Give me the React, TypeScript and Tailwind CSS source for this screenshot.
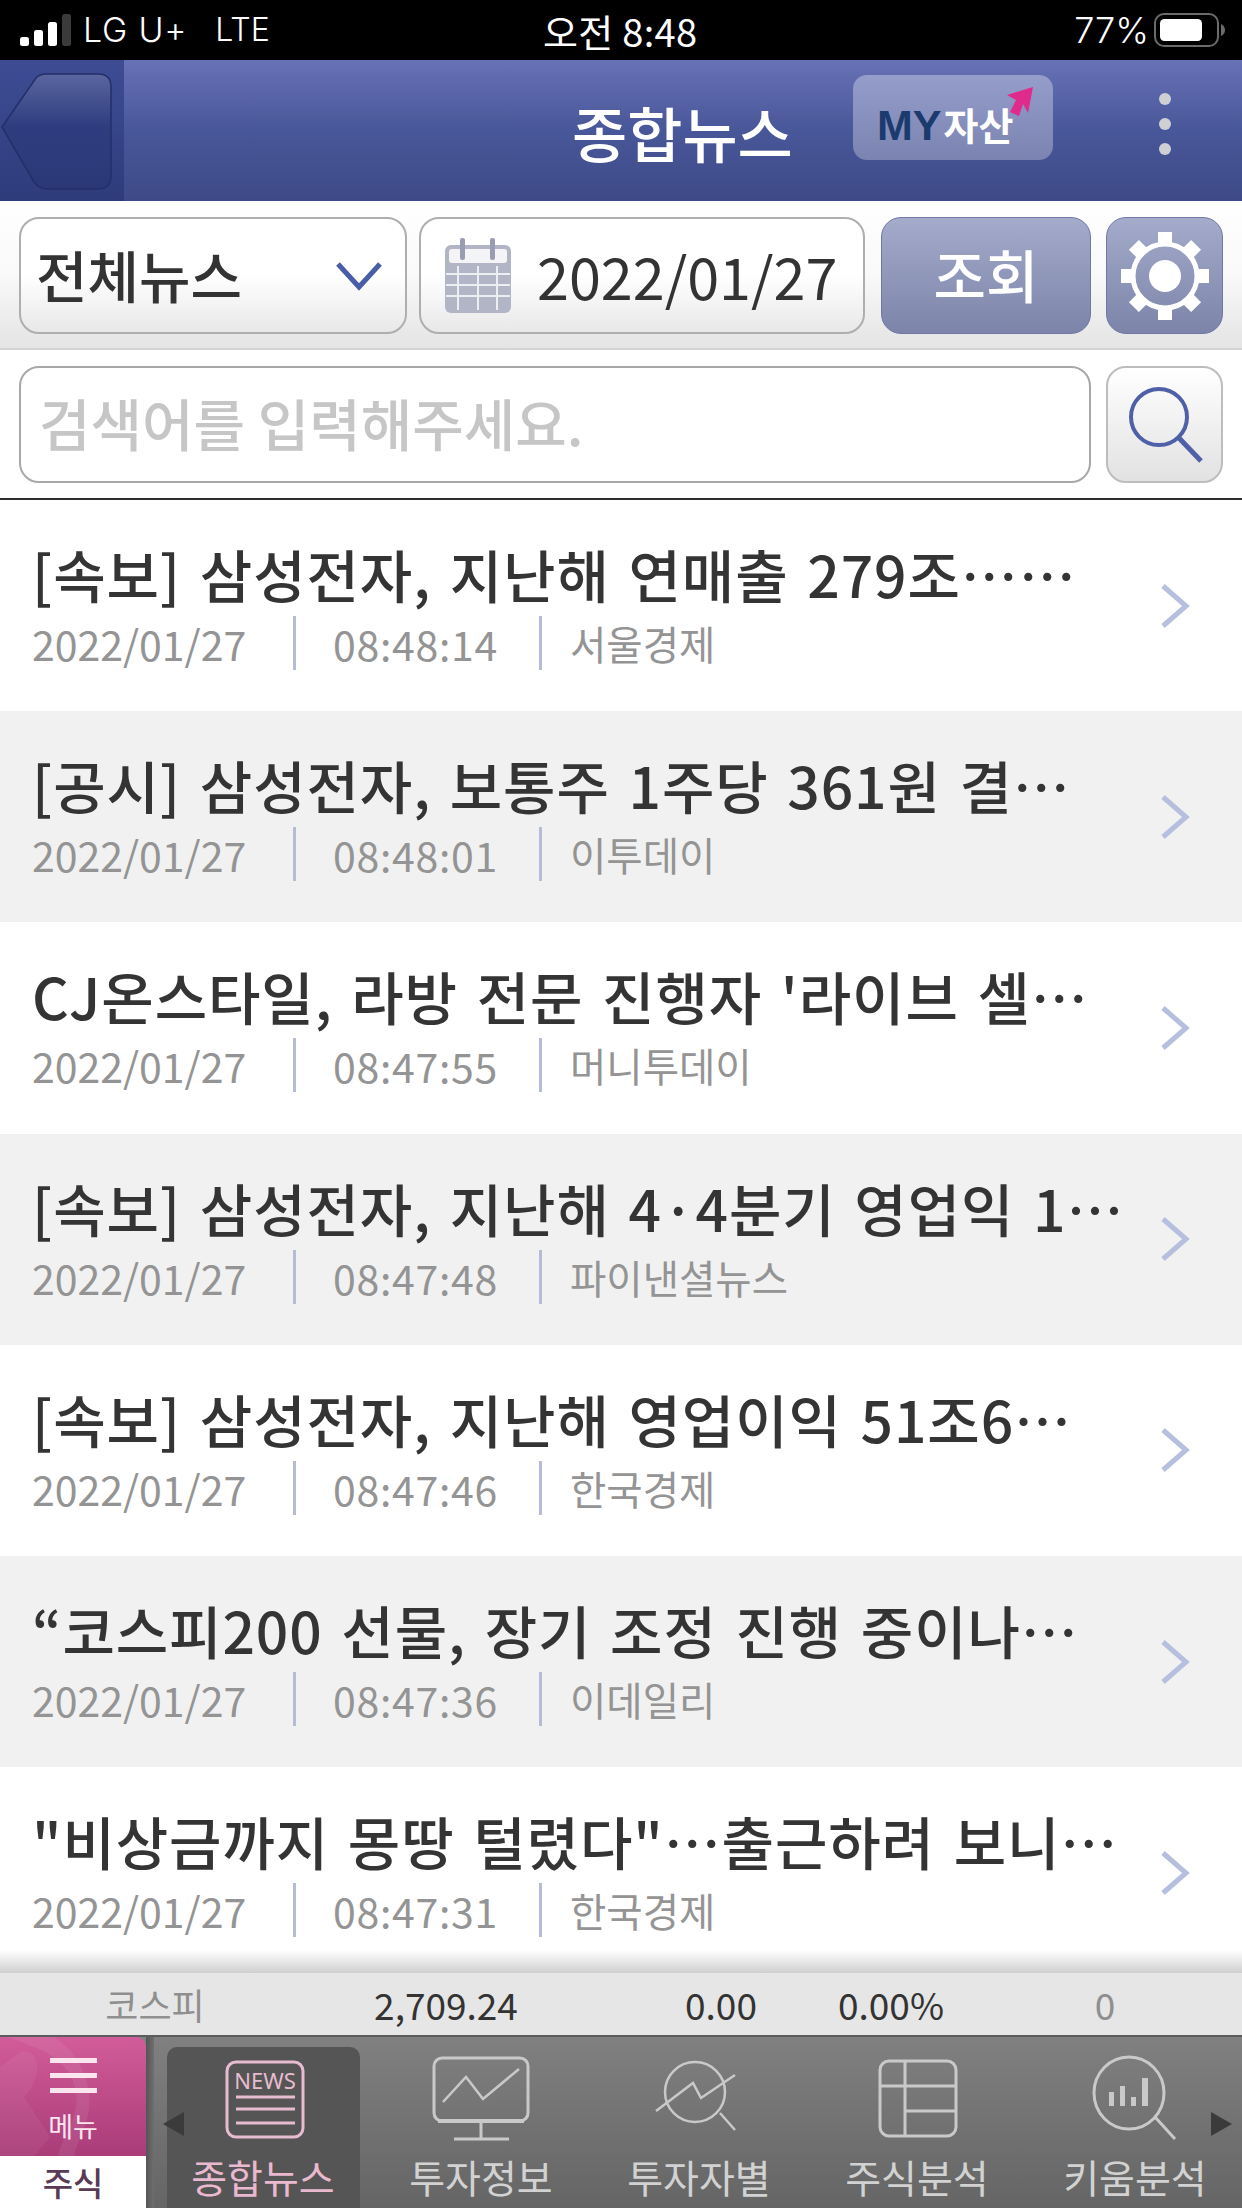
import React from "react";

const rows = [
  ["[속보] 삼성전자, 지난해 연매출 279조……", "08:48:14", "서울경제"],
  ["[공시] 삼성전자, 보통주 1주당 361원 결…", "08:48:01", "이투데이"],
  ["CJ온스타일, 라방 전문 진행자 '라이브 셀…", "08:47:55", "머니투데이"],
  ["[속보] 삼성전자, 지난해 4·4분기 영업익 1…", "08:47:48", "파이낸셜뉴스"],
  ["[속보] 삼성전자, 지난해 영업이익 51조6…", "08:47:46", "한국경제"],
  ["“코스피200 선물, 장기 조정 진행 중이나…", "08:47:36", "이데일리"],
  ["\"비상금까지 몽땅 털렸다\"…출근하려 보니…", "08:47:31", "한국경제"],
];

function StatusBar() {
  return (
    <div className="h-[60px] shrink-0 bg-black text-white flex items-center relative font-['Inter','Noto_Sans_CJK_KR',sans-serif] text-[34px] leading-[40px] font-light">
      <svg width="52" height="34" viewBox="0 0 52 34" className="ml-[20px]">
        <rect x="0" y="24" width="9" height="9" rx="2.5" fill="#fff" />
        <rect x="14" y="17" width="9" height="16" rx="2.5" fill="#fff" />
        <rect x="28" y="9" width="9" height="24" rx="2.5" fill="#fff" />
        <rect x="42" y="1" width="9" height="32" rx="2.5" fill="#3a3a3a" />
      </svg>
      <span className="ml-[11px] tracking-[0.8px]">LG U+</span>
      <span className="ml-[28px] text-[32px]">LTE</span>
      <span className="absolute left-[543px] top-[12px] text-[38px] leading-[38px] font-normal font-['Noto_Sans_CJK_KR',sans-serif] tracking-[0.3px]">오전 8:48</span>
      <span className="ml-auto mr-[5px] text-[36px]">77%</span>
      <svg width="72" height="34" viewBox="0 0 72 34" className="mr-[16px]">
        <rect x="1" y="1" width="63" height="32" rx="9" fill="none" stroke="#6b6b6b" strokeWidth="2" />
        <rect x="6" y="6" width="42" height="22" rx="4.5" fill="#fff" />
        <path d="M67 11 q4 2 4 6 t-4 6z" fill="#6b6b6b" />
      </svg>
    </div>
  );
}

function Header() {
  return (
    <div className="h-[141px] shrink-0 flex relative bg-gradient-to-b from-[#6872b6] via-[#485799] to-[#3e4a88]">
      <div className="w-[124px] h-full bg-gradient-to-b from-[#3e4c94] to-[#2e3c7c] flex items-center">
        <svg width="124" height="141" viewBox="0 0 124 141">
          <defs>
            <linearGradient id="bk" x1="0" y1="0" x2="0" y2="1">
              <stop offset="0" stopColor="#5a669f" />
              <stop offset="0.45" stopColor="#2f3d80" />
              <stop offset="1" stopColor="#2b3877" />
            </linearGradient>
          </defs>
          <path d="M2 67 L36 18 Q40 14 46 14 L98 14 Q111 14 111 27 L111 116 Q111 129 98 129 L48 129 Q39 129 34 122 Z" fill="url(#bk)" stroke="#232f6a" strokeWidth="1.5" />
        </svg>
      </div>
      <div className="absolute left-[572px] top-[37px] text-white text-[60px] leading-[70px] font-medium">종합뉴스</div>
      <div className="absolute left-[853px] top-[15px] w-[200px] h-[85px] rounded-[14px] bg-gradient-to-b from-[#959dcb] to-[#7b83b1]">
        <svg width="60" height="50" viewBox="0 0 60 50" className="absolute left-[145px] top-[5px]">
          <path d="M35 7 L9 15 L18 20 L12 32 L21 36 L25 24 L30 33 Z" fill="#e02a8c" />
        </svg>
        <div className="absolute left-[24px] top-[24px] flex items-baseline leading-[50px]">
          <span className="text-[43px] font-bold text-[#1b3a6e] font-['Liberation_Sans',sans-serif]">MY</span>
          <span className="text-[38px] font-bold text-white ml-[2px]">자산</span>
        </div>
      </div>
      <div className="absolute left-[1159px] top-[33px] flex flex-col gap-[13px]">
        <div className="w-[12px] h-[12px] rounded-full bg-[#cfd0d6]" />
        <div className="w-[12px] h-[12px] rounded-full bg-[#cfd0d6]" />
        <div className="w-[12px] h-[12px] rounded-full bg-[#cfd0d6]" />
      </div>
    </div>
  );
}

function Gear() {
  const teeth = [0, 45, 90, 135, 180, 225, 270, 315];
  return (
    <svg width="96" height="96" viewBox="-48 -48 96 96">
      {teeth.map((a) => (
        <rect key={a} x="-7" y="-44" width="14" height="14" fill="#fff" transform={`rotate(${a})`} />
      ))}
      <circle r="32" fill="none" stroke="#fff" strokeWidth="5" />
      <circle r="16" fill="#fff" />
    </svg>
  );
}

function FilterBar() {
  return (
    <div className="h-[149px] shrink-0 flex pl-[19px] pt-[16px] bg-gradient-to-b from-white via-[#f9f9f9] to-[#e4e4e4] border-b-[2px] border-[#d4d4d4]">
      <div className="w-[388px] h-[117px] rounded-[20px] border-[2px] border-[#aeaeae] bg-gradient-to-b from-white via-white to-[#e8e8e8] flex items-center pl-[15px] pr-[22px] justify-between">
        <span className="text-[56px] font-medium text-[#333] leading-none -mt-[4px]">전체뉴스</span>
        <svg width="48" height="30" viewBox="0 0 48 30"><path d="M3 3 L24 26 L45 3" fill="none" stroke="#4a5ea8" strokeWidth="5" /></svg>
      </div>
      <div className="ml-[12px] w-[446px] h-[117px] rounded-[20px] border-[2px] border-[#aeaeae] bg-gradient-to-b from-white via-white to-[#e8e8e8] flex items-center pl-[23px]">
        <svg width="68" height="76" viewBox="0 0 68 76">
          <rect x="1" y="7" width="66" height="68" rx="6" fill="#b2b5c6" />
          <rect x="5" y="11" width="58" height="14" rx="3" fill="#f4f4f6" />
          <rect x="16" y="0" width="5" height="22" rx="2" fill="#9a9db2" />
          <rect x="46" y="0" width="5" height="22" rx="2" fill="#9a9db2" />
          <path d="M2 36 H66 M2 47 H66 M2 58 H66 M14 28 V72 M34 28 V72 M53 28 V72" stroke="#eceef2" strokeWidth="2" />
        </svg>
        <span className="ml-[25px] text-[57.5px] text-[#333] leading-none">2022/01/27</span>
      </div>
      <div className="ml-[16px] w-[210px] h-[117px] rounded-[20px] border-[1px] border-[#6f78a4] bg-gradient-to-b from-[#a4abcb] to-[#7c84a9] flex items-center justify-center">
        <span className="text-[57px] text-white font-medium leading-none -mt-[4px]">조회</span>
      </div>
      <div className="ml-[15px] w-[117px] h-[117px] rounded-[20px] border-[1px] border-[#6f78a4] bg-gradient-to-b from-[#a4abcb] to-[#7c84a9] flex items-center justify-center">
        <Gear />
      </div>
    </div>
  );
}

function SearchBar() {
  return (
    <div className="h-[150px] shrink-0 flex pl-[19px] pt-[16px] bg-white border-b-[2px] border-[#2e2e2e]">
      <div className="w-[1072px] h-[117px] rounded-[20px] border-[2px] border-[#a8a8a8] bg-white flex items-center pl-[18px]">
        <span className="text-[56px] text-[#c6c6c6] leading-none font-medium -mt-[6px]">검색어를 입력해주세요.</span>
      </div>
      <div className="ml-[15px] w-[117px] h-[117px] rounded-[20px] border-[2px] border-[#bdbdbd] bg-gradient-to-b from-white to-[#e2e2e2] flex items-center justify-center">
        <svg width="84" height="84" viewBox="0 0 84 84">
          <circle cx="36" cy="34" r="28" fill="none" stroke="#5060a8" strokeWidth="4" />
          <path d="M56 55 L78 78" stroke="#5060a8" strokeWidth="5" fill="none" />
        </svg>
      </div>
    </div>
  );
}

function NewsRow({ title, time, src, alt }: { title: string; time: string; src: string; alt: boolean }) {
  return (
    <div className={`h-[211.2px] shrink-0 flex items-center pl-[32px] relative ${alt ? "bg-[#f1f1f1]" : "bg-white"}`}>
      <div className="flex-1 flex flex-col min-w-0">
        <div className="text-[57px] leading-[64px] text-[#343434] font-medium whitespace-nowrap tracking-[0.9px] [word-spacing:5px]">{title}</div>
        <div className="flex items-center text-[41px] leading-[54px] text-[#949494] h-[54px] mt-[11px]">
          <span className="w-[261px]">2022/01/27</span>
          <div className="w-[3px] h-[54px] bg-[#b5bdd6]" />
          <span className="w-[243px] pl-[37px] tracking-[0.7px]">{time}</span>
          <div className="w-[3px] h-[54px] bg-[#b5bdd6]" />
          <span className="pl-[28px] text-[39.5px]">{src}</span>
        </div>
      </div>
      <svg width="34" height="50" viewBox="0 0 34 50" className="mr-[50px] shrink-0 absolute right-0">
        <path d="M5 5 L28 25 L5 45" fill="none" stroke="#b6c0de" strokeWidth="5" />
      </svg>
    </div>
  );
}

function IndexBar() {
  return (
    <div className="h-[64px] shrink-0 bg-[#e6e6e6] flex items-center text-[37px] leading-[50px] text-[#333] border-b-[2px] border-[#5c5c5c]">
      <span className="w-[310px] text-center text-[#8f8f8f] text-[36px]">코스피</span>
      <span className="w-[272px] text-center">2,709.24</span>
      <span className="ml-[39px] w-[200px] text-center">0.00</span>
      <span className="w-[140px] text-center">0.00%</span>
      <span className="ml-[96px] w-[96px] text-center text-[#8f8f8f]">0</span>
    </div>
  );
}

const ic = "#c9c9c9";
function TabIcon({ kind }: { kind: number }) {
  if (kind === 0)
    return (
      <svg width="110" height="90" viewBox="0 0 110 90">
        <rect x="19" y="7" width="76" height="75" rx="9" fill="none" stroke="#e8bcd0" strokeWidth="3" />
        <text x="57" y="34" textAnchor="middle" fontSize="22" fill="#e8bcd0" fontFamily="'Noto Sans', sans-serif">NEWS</text>
        <path d="M28 42 H87 M28 54 H87 M28 68 H87" stroke="#e8bcd0" strokeWidth="3" />
      </svg>
    );
  if (kind === 1)
    return (
      <svg width="110" height="90" viewBox="0 0 110 90">
        <rect x="8" y="3" width="94" height="63" rx="8" fill="none" stroke={ic} strokeWidth="3" />
        <path d="M12 66 H98" stroke={ic} strokeWidth="4" />
        <path d="M17 47 L40 22 L57 44 L93 14" fill="none" stroke={ic} strokeWidth="2.5" />
        <path d="M55 68 V84 M28 84 H83" stroke={ic} strokeWidth="3" fill="none" />
      </svg>
    );
  if (kind === 2)
    return (
      <svg width="110" height="90" viewBox="0 0 110 90">
        <circle cx="51" cy="37" r="30" fill="none" stroke={ic} strokeWidth="2.5" />
        <path d="M12 56 L49 28 L57 43 L91 20 M76 58 L91 75" fill="none" stroke={ic} strokeWidth="2.5" />
      </svg>
    );
  if (kind === 3)
    return (
      <svg width="110" height="90" viewBox="0 0 110 90">
        <rect x="18" y="6" width="76" height="75" rx="9" fill="none" stroke={ic} strokeWidth="3" />
        <path d="M43 6 V81 M18 31 H94 M43 56 H94" fill="none" stroke={ic} strokeWidth="3" />
      </svg>
    );
  return (
    <svg width="110" height="90" viewBox="0 0 110 90">
      <ellipse cx="49" cy="38" rx="35" ry="36" fill="none" stroke={ic} strokeWidth="3" />
      <path d="M75 62 L95 84" fill="none" stroke={ic} strokeWidth="3" />
      <rect x="29" y="37" width="5" height="14" fill={ic} />
      <rect x="40" y="31" width="5" height="20" fill={ic} />
      <rect x="51" y="42" width="5" height="9" fill={ic} />
      <rect x="62" y="23" width="6" height="28" fill={ic} />
    </svg>
  );
}

const tabs = ["종합뉴스", "투자정보", "투자자별", "주식분석", "키움분석"];

function BottomNav() {
  return (
    <div className="h-[171px] shrink-0 flex relative overflow-hidden bg-gradient-to-b from-[#808080] to-[#656565]">
      <div className="w-[146px] shrink-0 flex flex-col relative">
        <div className="h-[119px] rounded-tr-[10px] overflow-hidden relative bg-gradient-to-b from-[#d25c99] to-[#a93c79] flex flex-col items-center">
          <svg width="146" height="119" viewBox="0 0 146 119" className="absolute left-0 top-0">
            <path d="M8 0 C40 12 70 20 76 55 C80 80 62 100 58 119 L74 119 C80 95 94 80 88 50 C82 22 66 8 54 0 Z" fill="#ffffff" opacity="0.07" />
            <path d="M0 30 L22 14 C44 14 40 46 24 60 L50 100 L34 119 L0 119 Z" fill="#ffffff" opacity="0.05" />
          </svg>
          <div className="relative mt-[21px] flex flex-col gap-[10px]">
            <div className="w-[47px] h-[5px] bg-[#fbe6f0]" />
            <div className="w-[47px] h-[5px] bg-[#fbe6f0]" />
            <div className="w-[47px] h-[5px] bg-[#fbe6f0]" />
          </div>
          <div className="relative mt-[16px] text-[27px] leading-[34px] text-[#fbe6f0]">메뉴</div>
        </div>
        <div className="flex-1 bg-white flex items-center justify-center text-[33px] font-medium text-[#5a3a55] leading-none">주식</div>
      </div>
      <div className="w-[8px] shrink-0 bg-gradient-to-r from-[#555555] to-[#6f6f6f]" />
      {tabs.map((t, i) => (
        <div key={t} className="w-[218px] shrink-0 flex justify-center">
          <div className={`w-[193px] mt-[10px] rounded-t-[10px] flex flex-col items-center ${i === 0 ? "bg-[#555555]" : ""}`}>
            <div className="mt-[8px]"><TabIcon kind={i} /></div>
            <div className={`mt-[8px] text-[39px] leading-[46px] ${i === 0 ? "text-[#eab9d0]" : "text-[#d2d2d2]"}`}>{t}</div>
          </div>
        </div>
      ))}
      <svg width="22" height="24" viewBox="0 0 22 24" className="absolute left-[163px] top-[75px]"><path d="M21 0 V24 L0 12Z" fill="#3b3b3b" /></svg>
      <svg width="22" height="24" viewBox="0 0 22 24" className="absolute left-[1211px] top-[75px]"><path d="M0 0 V24 L21 12Z" fill="#3b3b3b" /></svg>
    </div>
  );
}

export default function App() {
  return (
    <div className="w-[1242px] h-[2208px] overflow-hidden flex flex-col bg-white font-['Noto_Sans_CJK_KR','Noto_Sans',sans-serif]">
      <StatusBar />
      <Header />
      <FilterBar />
      <SearchBar />
      <div className="h-[1450px] shrink-0 overflow-hidden flex flex-col relative">
        {rows.map((r, i) => (
          <NewsRow key={i} title={r[0]} time={r[1]} src={r[2]} alt={i % 2 === 1} />
        ))}
      </div>
      <div className="h-[23px] shrink-0 bg-gradient-to-b from-white to-[#cfcfcf]" />
      <IndexBar />
      <BottomNav />
    </div>
  );
}
